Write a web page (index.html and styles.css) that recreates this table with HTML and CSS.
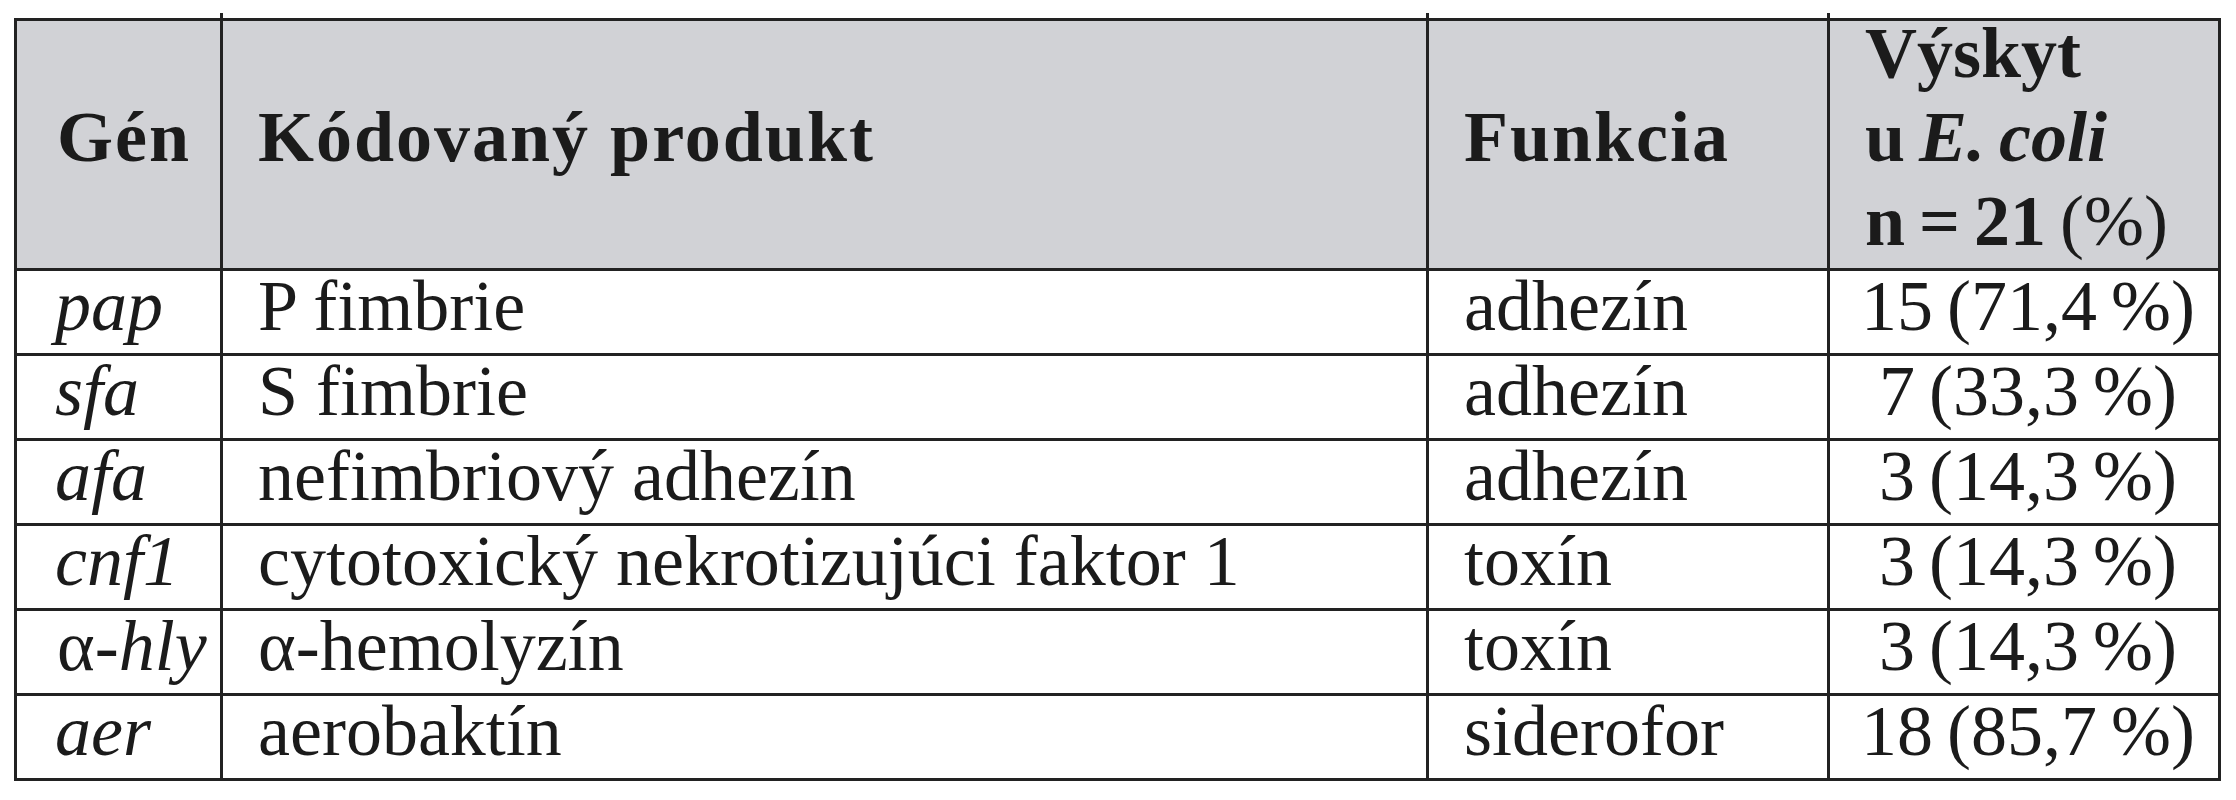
FILE: index.html
```html
<!DOCTYPE html>
<html lang="sk">
<head>
<meta charset="utf-8">
<title>Gény virulencie E. coli</title>
<link rel="stylesheet" href="styles.css">
</head>
<body>
<table class="genes">
  <colgroup>
    <col class="w-gen">
    <col class="w-prod">
    <col class="w-fun">
    <col class="w-occ">
  </colgroup>
  <thead>
    <tr>
      <th class="c-gen"><div class="single">Gén</div></th>
      <th class="c-prod"><div class="single">Kódovaný produkt</div></th>
      <th class="c-fun"><div class="single">Funkcia</div></th>
      <th class="c-occ"><div class="multi">Výskyt<br>u <i>E. coli</i><br>n = 21 <span class="light">(%)</span></div></th>
    </tr>
  </thead>
  <tbody>
    <tr>
      <td class="c-gen"><i>pap</i></td>
      <td>P fimbrie</td>
      <td>adhezín</td>
      <td class="c-occ">15 (71,4 %)</td>
    </tr>
    <tr>
      <td class="c-gen"><i>sfa</i></td>
      <td>S fimbrie</td>
      <td>adhezín</td>
      <td class="c-occ">7 (33,3 %)</td>
    </tr>
    <tr>
      <td class="c-gen"><i>afa</i></td>
      <td>nefimbriový adhezín</td>
      <td>adhezín</td>
      <td class="c-occ">3 (14,3 %)</td>
    </tr>
    <tr>
      <td class="c-gen"><i>cnf1</i></td>
      <td>cytotoxický nekrotizujúci faktor 1</td>
      <td>toxín</td>
      <td class="c-occ">3 (14,3 %)</td>
    </tr>
    <tr>
      <td class="c-gen alpha">α-<i>hly</i></td>
      <td>α-hemolyzín</td>
      <td>toxín</td>
      <td class="c-occ">3 (14,3 %)</td>
    </tr>
    <tr>
      <td class="c-gen"><i>aer</i></td>
      <td>aerobaktín</td>
      <td>siderofor</td>
      <td class="c-occ">18 (85,7 %)</td>
    </tr>
  </tbody>
</table>
</body>
</html>
```

FILE: styles.css
```css
html, body {
  margin: 0;
  padding: 0;
  background: #ffffff;
}

.genes {
  margin: 18px 0 0 14px;
  border-collapse: separate;
  border-spacing: 0;
  border-top: 3px solid #222222;
  border-left: 3px solid #222222;
  table-layout: fixed;
  width: 2207px;
  font-family: "Liberation Serif", "Times New Roman", serif;
  font-size: 72px;
  color: #1b1b1b;
}

.w-gen { width: 206px; }
.w-prod { width: 1206px; }
.w-fun { width: 401px; }
.w-occ { width: 391px; }

.genes th,
.genes td {
  box-sizing: border-box;
  border-right: 3px solid #222222;
  border-bottom: 3px solid #222222;
  white-space: nowrap;
}

.genes th {
  position: relative;
  height: 250px;
  padding: 0 0 0 35px;
  background: #d1d2d6;
  font-weight: bold;
  text-align: left;
  vertical-align: top;
  line-height: 84px;
  letter-spacing: 2px;
}

.genes th:not(:last-child)::after {
  content: "";
  position: absolute;
  top: -8px;
  right: -3px;
  width: 3px;
  height: 8px;
  background: #222222;
}

.genes th.c-gen {
  padding-left: 40px;
}

.genes th .single {
  margin-top: 74px;
}

.genes th .multi {
  margin-top: -10px;
  letter-spacing: 0;
  word-spacing: -4px;
}

.genes th .light {
  font-weight: normal;
}

.genes td {
  height: 85px;
  padding: 0 0 12px 35px;
  line-height: 70px;
  vertical-align: top;
  font-weight: normal;
}

.genes td.c-gen {
  padding-left: 38px;
}

.genes td.alpha {
  padding-left: 40px;
}

.genes td.c-occ {
  padding-left: 8px;
  text-align: center;
  word-spacing: -4px;
}
```
